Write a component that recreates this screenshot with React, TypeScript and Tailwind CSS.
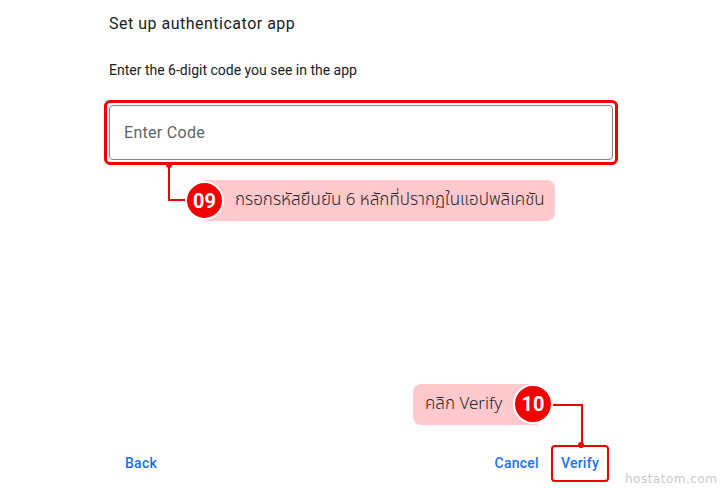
import React from "react";

const thai = { fontFamily: '"Noto Sans Thai", "Tahoma", "Noto Sans", sans-serif' };
const red = "#f00000";

function Badge({ n, className = "" }: { n: string; className?: string }) {
  return (
    <div
      className={`relative z-10 flex shrink-0 items-center justify-center rounded-full border-2 border-white bg-[#f00000] text-[20px] font-bold text-white ${className}`}
    >
      {n}
    </div>
  );
}

export default function App() {
  return (
    <div
      className="relative flex h-[488px] w-[720px] flex-col overflow-hidden bg-white text-[#202124]"
      style={{ fontFamily: "Roboto, Arial, sans-serif" }}
    >
      <div className="pl-[109px] pr-[107px] pt-[12px]">
        <h1 className="text-[16px] leading-6 font-normal tracking-[0.5px]">Set up authenticator app</h1>
        <p className="mt-6 text-[14px] leading-5">Enter the 6-digit code you see in the app</p>
        {/* highlighted input */}
        <div className="-ml-[5px] -mr-[5px] mt-[20px] rounded-[6px] border-[3px] border-[#f00000] p-[2px]">
          <div className="flex h-[55px] items-center rounded-[4px] border border-[#80868b] px-[14px] text-[16px] tracking-[0.3px] text-[#5f6368]">
            Enter Code
          </div>
        </div>
      </div>

      <div className="flex-1" />

      <div className="flex items-center justify-between pb-[6px] pl-[109px] pr-[111px] text-[14px] font-medium tracking-[0.25px] text-[#1a73e8]">
        <button className="h-9 rounded px-4">Back</button>
        <div className="flex items-center gap-[3px]">
          <button className="h-9 rounded px-[9px]">Cancel</button>
          <button className="h-[37px] rounded-[4px] border-2 border-[#f00000] px-[8px]">Verify</button>
        </div>
      </div>

      {/* callout 09 */}
      <div className="absolute left-[166px] top-[162px] flex items-start">
        <svg width="24" height="40" className="shrink-0">
          <circle cx="3" cy="3" r="3" fill={red} />
          <path d="M3 3V38H24" fill="none" stroke={red} strokeWidth="2" />
        </svg>
        <Badge n="09" className="-ml-[5px] mt-[19px] h-[39px] w-[39px]" />
        <div
          className="-ml-[19px] mt-[18px] flex h-[41px] w-[350px] items-center rounded-r-[8px] bg-[#ffc9cd] pl-[30px] text-[17px] font-light text-[#262626]"
          style={thai}
        >
          กรอกรหัสยืนยัน 6 หลักที่ปรากฏในแอปพลิเคชัน
        </div>
      </div>

      {/* callout 10 */}
      <div className="absolute left-[413px] top-[384px] flex items-start">
        <div
          className="flex h-[41px] w-[125px] shrink-0 items-center rounded-l-[8px] bg-[#ffc9cd] pl-[12px] text-[17px] font-light text-[#262626]"
          style={thai}
        >
          คลิก Verify
        </div>
        <Badge n="10" className="-ml-[25px] h-[40px] w-[40px]" />
        <svg width="32" height="64" className="shrink-0">
          <path d="M0 21H29V61" fill="none" stroke={red} strokeWidth="2" />
          <circle cx="28" cy="61" r="3" fill={red} />
        </svg>
      </div>

      <div
        className="absolute left-[625px] top-[470px] text-[12px] tracking-[0.5px] text-[#c9c9c9]"
        style={{ fontFamily: '"DejaVu Sans", sans-serif' }}
      >
        hostatom.com
      </div>
    </div>
  );
}
